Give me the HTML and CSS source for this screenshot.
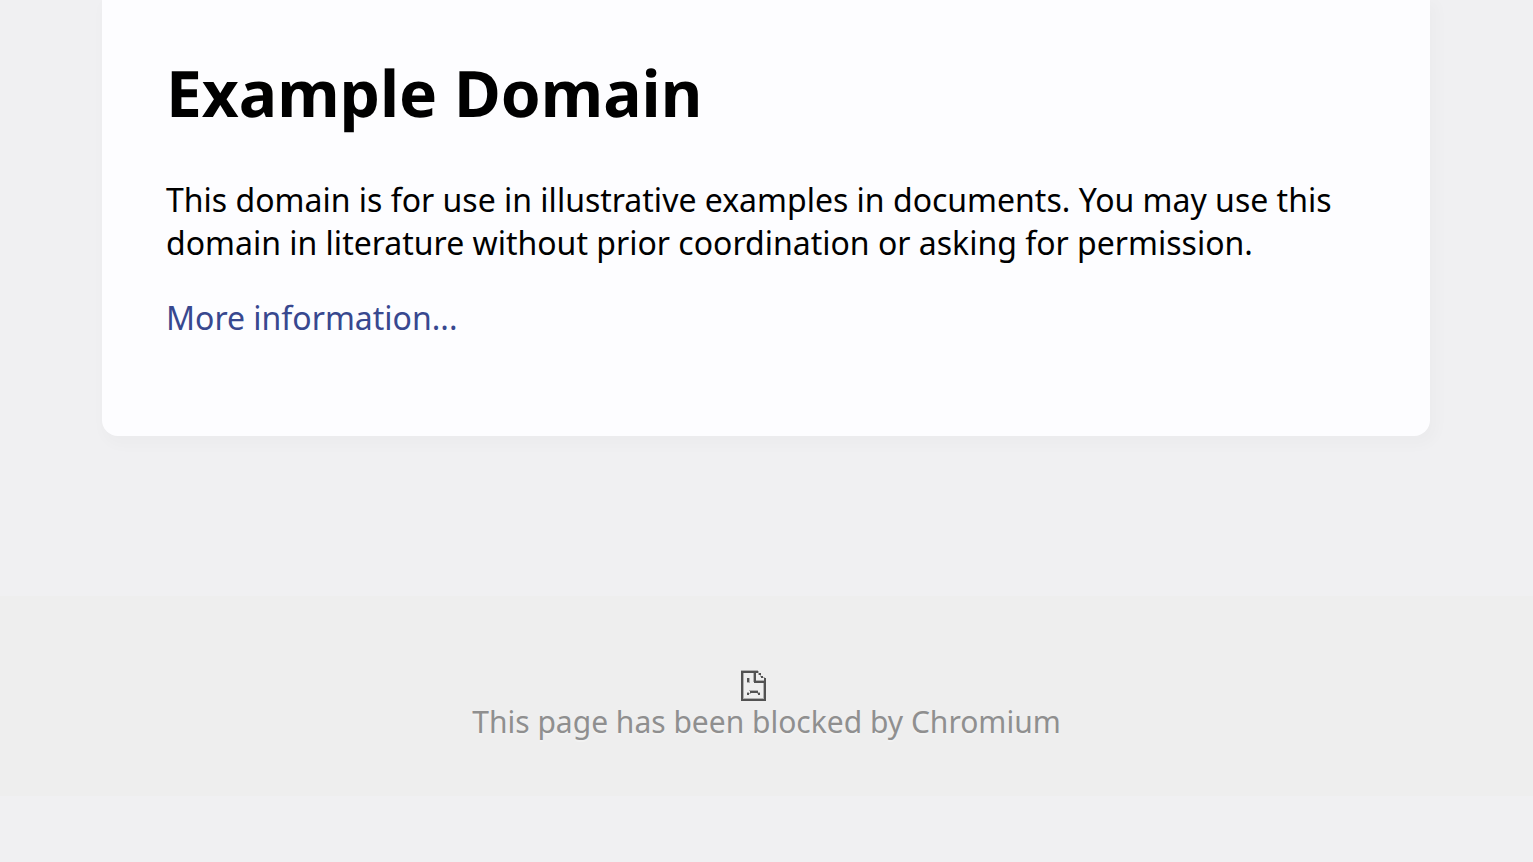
FILE: index.html
```
<!DOCTYPE html>
<html lang="en">
<head>
<meta charset="utf-8">
<title>Example Domain</title>
<link rel="stylesheet" href="styles.css">
</head>
<body>
<main class="card">
<h1 class="title">Example Domain</h1>
<p class="text">This domain is for use in illustrative examples in documents. You may use this domain in literature without prior coordination or asking for permission.</p>
<p class="text"><a class="link" href="#">More information...</a></p>
</main>
<section class="blocked">
<svg class="sad-page" viewBox="0 -1 51 31" aria-hidden="true">
<path fill="#b0b0b0" d="M0-1h17v1H0zM2 2h1v26H2zM2 27h21v1H2zM22 12h1v16h-1zM12 2h1v9h-1zM15 9h8v1h-8zM17 0h1v2h-1zM17 2h1v2h-1zM19 4h1v2h-1zM21 6h3v1h-3zM8 7h1v5H8zM6 11h2v1H6zM8 19h9v1H8zM8 22h2v1H8zM16 22h1v1h-1zM6 21h2v1H6zM17 21h2v1h-2z"/>
<path fill="#525252" d="M0 0h17v2H2v26h21V12H13V2h2v8h8V7h2v23H0zM18 2h2v2h-2zM20 5h2v2h-2zM6 7h2v4H6zM9 20h8v2H9zM6 22h2v2H6zM17 22h2v2h-2z"/>
</svg>
<p class="blocked-text">This page has been blocked by Chromium</p>
</section>
</body>
</html>
```
FILE: styles.css
```
body {
  margin: 0;
  background: #f0f0f2;
  font-family: "Noto Sans", sans-serif;
  color: #000;
}
.card {
  box-sizing: border-box;
  margin: 0 103px 160px 102px;
  padding: 49px 64px 97px;
  background: #fdfdff;
  border-radius: 0 0 16px 16px;
  box-shadow: 4px 6px 14px 4px rgba(0, 0, 0, 0.02);
}
.title {
  margin: 0 0 42px;
  font-size: 64px;
  line-height: 87px;
  text-rendering: geometricPrecision;
}
.text {
  margin: 0 0 32px;
  font-size: 32px;
  line-height: 43px;
}
.text:last-child {
  margin-bottom: 0;
}
.link {
  color: #38488f;
  text-decoration: none;
}
.blocked {
  box-sizing: border-box;
  min-height: 200px;
  padding: 74px 16px 50px;
  background: #eee;
  text-align: center;
}
.sad-page {
  display: block;
  width: 51px;
  height: 31px;
  margin: 0 auto;
}
.blocked-text {
  margin: 0;
  color: #8f8f8f;
  font-size: 30px;
  line-height: 42px;
  text-shadow: 0 2px 0 rgba(255, 255, 255, 0.3);
}
```
